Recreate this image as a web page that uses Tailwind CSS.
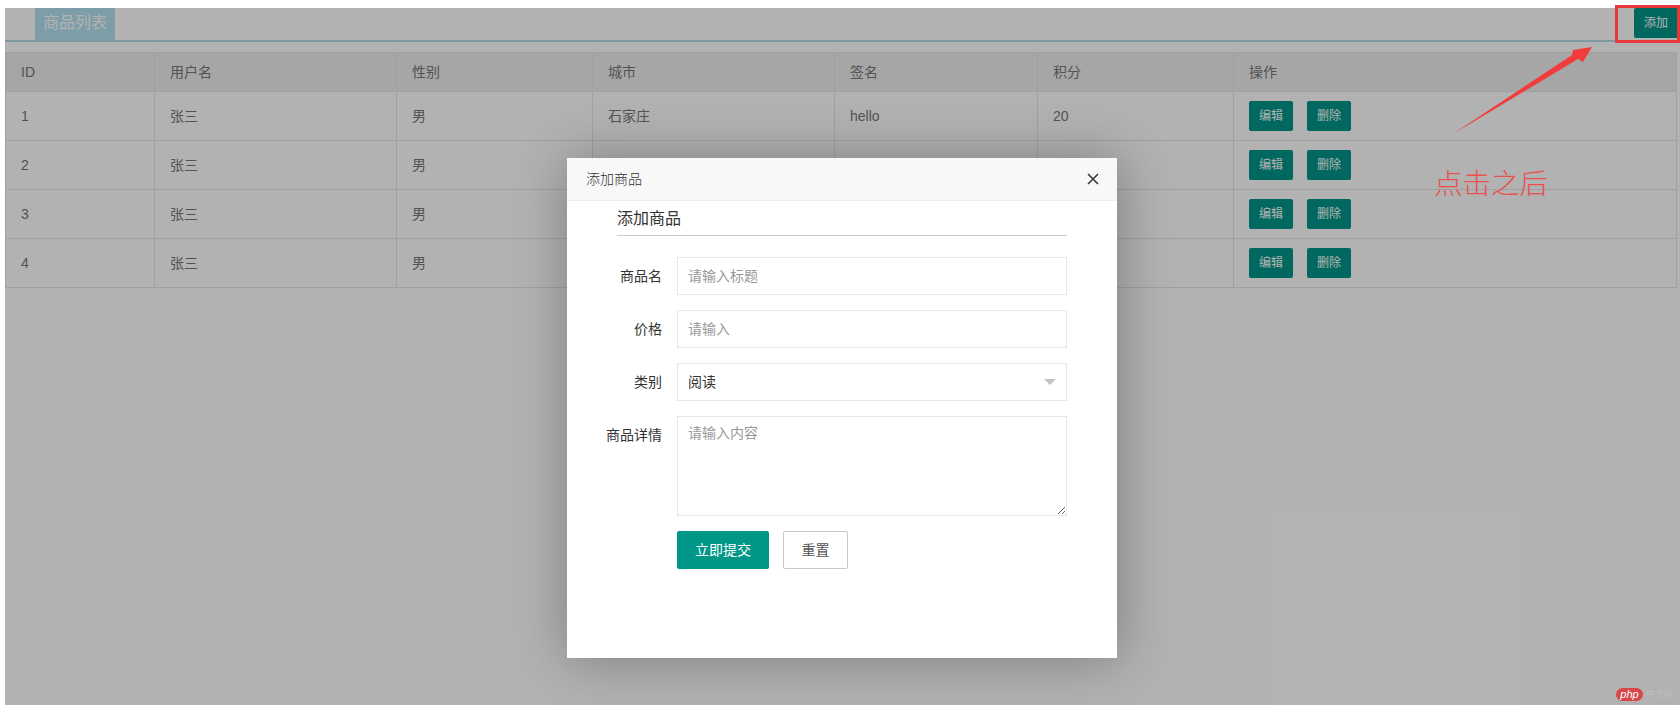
<!DOCTYPE html>
<html lang="zh-CN">
<head>
    <meta charset="UTF-8">
    <title>商品列表</title>
    <script src="https://cdn.jsdelivr.net/npm/@tailwindcss/browser@4"></script>
</head>
<body class="bg-white overflow-hidden font-['Liberation_Sans','Noto_Sans_CJK_SC',sans-serif]">
    <div class="relative h-[705px] w-[1680px] overflow-hidden">
        <div class="absolute left-[5px] right-0 top-[8px] bottom-0 overflow-hidden bg-white pr-[3px]">
            <!-- title bar -->
            <div class="flex h-[34px] justify-between border-b-2 border-[#b3dde6] mr-[-3px]">
                <div class="ml-[30px] h-[32px] w-[80px] bg-[#b3e3f2] text-center text-base leading-[30px] text-white">商品列表</div>
                <button class="h-[30px] w-[44px] rounded-[2px] bg-[#009688] text-xs text-white mr-[2px]">添加</button>
            </div>

            <!-- table -->
            <table class="mt-[10px] w-[1672px] table-fixed border-collapse text-sm text-[#777]">
                <colgroup>
                    <col class="w-[149px]"><col class="w-[242px]"><col class="w-[196px]"><col class="w-[242px]"><col class="w-[203px]"><col class="w-[196px]"><col>
                </colgroup>
                <thead class="bg-[#eeeeee]">
                    <tr class="h-[39px] text-left">
                        <th class="border border-[#e6e6e6] px-[15px] font-normal">ID</th>
                        <th class="border border-[#e6e6e6] px-[15px] font-normal">用户名</th>
                        <th class="border border-[#e6e6e6] px-[15px] font-normal">性别</th>
                        <th class="border border-[#e6e6e6] px-[15px] font-normal">城市</th>
                        <th class="border border-[#e6e6e6] px-[15px] font-normal">签名</th>
                        <th class="border border-[#e6e6e6] px-[15px] font-normal">积分</th>
                        <th class="border border-[#e6e6e6] px-[15px] font-normal">操作</th>
                    </tr>
                </thead>
                <tbody>
                    <tr class="h-[49px]">
                        <td class="border border-[#e6e6e6] px-[15px]">1</td>
                        <td class="border border-[#e6e6e6] px-[15px]">张三</td>
                        <td class="border border-[#e6e6e6] px-[15px]">男</td>
                        <td class="border border-[#e6e6e6] px-[15px]">石家庄</td>
                        <td class="border border-[#e6e6e6] px-[15px]">hello</td>
                        <td class="border border-[#e6e6e6] px-[15px]">20</td>
                        <td class="border border-[#e6e6e6] px-[15px]">
                            <div class="flex gap-[14px]">
                                <button class="h-[30px] w-[44px] rounded-[2px] bg-[#009688] text-xs text-white">编辑</button>
                                <button class="h-[30px] w-[44px] rounded-[2px] bg-[#009688] text-xs text-white">删除</button>
                            </div>
                        </td>
                    </tr>
                    <tr class="h-[49px]">
                        <td class="border border-[#e6e6e6] px-[15px]">2</td>
                        <td class="border border-[#e6e6e6] px-[15px]">张三</td>
                        <td class="border border-[#e6e6e6] px-[15px]">男</td>
                        <td class="border border-[#e6e6e6] px-[15px]"></td>
                        <td class="border border-[#e6e6e6] px-[15px]"></td>
                        <td class="border border-[#e6e6e6] px-[15px]"></td>
                        <td class="border border-[#e6e6e6] px-[15px]">
                            <div class="flex gap-[14px]">
                                <button class="h-[30px] w-[44px] rounded-[2px] bg-[#009688] text-xs text-white">编辑</button>
                                <button class="h-[30px] w-[44px] rounded-[2px] bg-[#009688] text-xs text-white">删除</button>
                            </div>
                        </td>
                    </tr>
                    <tr class="h-[49px]">
                        <td class="border border-[#e6e6e6] px-[15px]">3</td>
                        <td class="border border-[#e6e6e6] px-[15px]">张三</td>
                        <td class="border border-[#e6e6e6] px-[15px]">男</td>
                        <td class="border border-[#e6e6e6] px-[15px]"></td>
                        <td class="border border-[#e6e6e6] px-[15px]"></td>
                        <td class="border border-[#e6e6e6] px-[15px]"></td>
                        <td class="border border-[#e6e6e6] px-[15px]">
                            <div class="flex gap-[14px]">
                                <button class="h-[30px] w-[44px] rounded-[2px] bg-[#009688] text-xs text-white">编辑</button>
                                <button class="h-[30px] w-[44px] rounded-[2px] bg-[#009688] text-xs text-white">删除</button>
                            </div>
                        </td>
                    </tr>
                    <tr class="h-[49px]">
                        <td class="border border-[#e6e6e6] px-[15px]">4</td>
                        <td class="border border-[#e6e6e6] px-[15px]">张三</td>
                        <td class="border border-[#e6e6e6] px-[15px]">男</td>
                        <td class="border border-[#e6e6e6] px-[15px]"></td>
                        <td class="border border-[#e6e6e6] px-[15px]"></td>
                        <td class="border border-[#e6e6e6] px-[15px]"></td>
                        <td class="border border-[#e6e6e6] px-[15px]">
                            <div class="flex gap-[14px]">
                                <button class="h-[30px] w-[44px] rounded-[2px] bg-[#009688] text-xs text-white">编辑</button>
                                <button class="h-[30px] w-[44px] rounded-[2px] bg-[#009688] text-xs text-white">删除</button>
                            </div>
                        </td>
                    </tr>
                </tbody>
            </table>

            <!-- shade -->
            <div class="absolute inset-0 bg-black/30"></div>
        </div>

        <!-- dialog -->
        <div class="absolute left-[567px] top-[158px] flex h-[500px] w-[550px] flex-col bg-white text-sm shadow-[1px_1px_50px_rgba(0,0,0,0.3)]">
            <div class="flex h-[43px] shrink-0 items-center justify-between border-b border-[#eee] bg-[#f8f8f8] pl-[19px] pr-[17px] text-[#333]">
                <span class="font-light">添加商品</span>
                <svg class="h-[14px] w-[14px]" viewBox="0 0 14 14" fill="none" stroke="#333" stroke-width="1.5"><path d="M2 2l10 10M12 2L2 12"/></svg>
            </div>
            <div class="pl-[50px] pr-[50px]">
                <div class="h-[35px] border-b border-[#ccc] text-base leading-[36px] text-[#333]">添加商品</div>
                <div class="mt-[21px] flex h-[38px] items-center">
                    <label class="w-[45px] text-right text-[#333]">商品名</label>
                    <input class="ml-[15px] h-[38px] w-[390px] border border-[#e6e6e6] px-[10px] placeholder:text-[#999]" placeholder="请输入标题">
                </div>
                <div class="mt-[15px] flex h-[38px] items-center">
                    <label class="w-[45px] text-right text-[#333]">价格</label>
                    <input class="ml-[15px] h-[38px] w-[390px] border border-[#e6e6e6] px-[10px] placeholder:text-[#999]" placeholder="请输入">
                </div>
                <div class="mt-[15px] flex h-[38px] items-center">
                    <label class="w-[45px] text-right text-[#333]">类别</label>
                    <div class="ml-[15px] flex h-[38px] w-[390px] items-center justify-between border border-[#e6e6e6] px-[10px] text-[#333]">
                        <span>阅读</span>
                        <span class="border-x-[6px] border-t-[6px] border-x-transparent border-t-[#c2c2c2]"></span>
                    </div>
                </div>
                <div class="mt-[15px] flex">
                    <label class="flex w-[45px] shrink-0 justify-end whitespace-nowrap pt-[9px] text-[#333]">商品详情</label>
                    <textarea class="ml-[15px] h-[100px] w-[390px] border border-[#e6e6e6] px-[10px] py-[6px] placeholder:text-[#999]" placeholder="请输入内容"></textarea>
                </div>
                <div class="ml-[60px] mt-[15px] flex gap-[14px]">
                    <button class="h-[38px] w-[92px] rounded-[2px] bg-[#009688] text-sm text-white">立即提交</button>
                    <button class="h-[38px] w-[65px] rounded-[2px] border border-[#c9c9c9] bg-white text-sm text-[#555]">重置</button>
                </div>
            </div>
        </div>

        <!-- annotation drawn on the screenshot -->
        <div class="absolute left-[1615px] top-[5px] h-[38px] w-[65px] border-[3px] border-[#e8383a]"></div>
        <svg class="absolute left-[1440px] top-[40px]" width="170" height="100" viewBox="0 0 170 100">
            <path d="M13 94L132 15L133 10L152 7L143 22L138 19Z" fill="#f23c3c"/>
        </svg>
        <div class="absolute left-[1434px] top-[168px] font-['Liberation_Serif','Noto_Sans_CJK_SC',serif] text-[28.5px] font-light leading-[34px] text-[#e8514f]">点击之后</div>

        <!-- watermark -->
        <div class="absolute left-[1616px] top-[688px] flex items-center gap-[3px]">
            <span class="flex h-[13px] w-[27px] items-center justify-center rounded-full bg-[#d9454a] text-[11px] italic leading-none text-white">php</span>
            <span class="text-[9px] leading-none text-[#bdbdbd]">中文网</span>
        </div>
    </div>
</body>
</html>
